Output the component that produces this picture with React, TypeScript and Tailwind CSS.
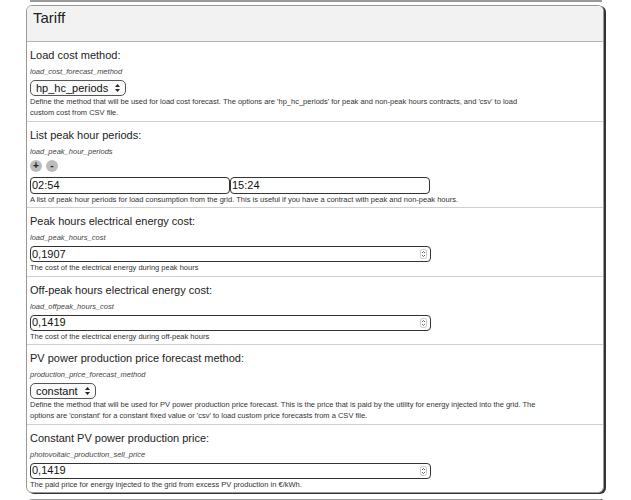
import React from 'react'

const font = { fontFamily: '"Liberation Sans", Arial, sans-serif' }

function Spinner() {
  return (
    <svg width="7" height="10" viewBox="0 0 7 10" className="shrink-0">
      <rect x="0.5" y="0.5" width="6" height="9" rx="2" fill="none" stroke="#bbb" strokeWidth="0.8" />
      <path d="M2 4 L3.5 2.5 L5 4" fill="none" stroke="#444" strokeWidth="0.8" />
      <path d="M2 6 L3.5 7.5 L5 6" fill="none" stroke="#444" strokeWidth="0.8" />
    </svg>
  )
}

function SelectArrows() {
  return (
    <svg width="7" height="10" viewBox="0 0 7 10" className="shrink-0">
      <path d="M1 4 L3.5 1 L6 4 Z" fill="#222" />
      <path d="M1 6 L3.5 9 L6 6 Z" fill="#222" />
    </svg>
  )
}

function Field({ label, name, children, desc, last }: { label: string; name: string; children: React.ReactNode; desc: React.ReactNode; last?: boolean }) {
  return (
    <div className={`px-[3px] pt-[7px] pb-[2.5px] ${last ? '' : 'border-b border-[#cfcfcf]'}`}>
      <div className="text-[11px] leading-[13px] text-[#222]">{label}</div>
      <div className="text-[7.5px] leading-[9px] italic text-[#444] mt-[5px]">{name}</div>
      <div className="mt-[4px]">{children}</div>
      <div className="text-[7.5px] leading-[11px] text-[#333]">{desc}</div>
    </div>
  )
}

function Select({ value, width }: { value: string; width: string }) {
  return (
    <div className={`${width} h-[16px] border border-[#555] rounded-[5px] bg-[#fafafa] flex items-center justify-between pl-[5px] pr-[4px]`}>
      <span className="text-[11px] leading-none text-[#111]">{value}</span>
      <SelectArrows />
    </div>
  )
}

function NumberInput({ value }: { value: string }) {
  return (
    <div className="w-[401px] h-[16px] border border-[#333] rounded-[4px] bg-white flex items-center justify-between pl-[1px] pr-[3px]">
      <span className="text-[11px] leading-none text-[#111]">{value}</span>
      <Spinner />
    </div>
  )
}

export default function App() {
  return (
    <div style={font} className="w-[631px] h-[500px] overflow-hidden bg-white relative">
      <div className="ml-[30px] w-[572px] h-[2px] bg-[#999]" />
      <div className="ml-[26px] mt-[3px] w-[578px] border border-[#999] rounded-[6px] shadow-[2px_1px_0_#333] bg-white overflow-hidden">
        <div className="h-[36px] bg-[#f2f2f2] border-b border-[#b5b5b5] px-[6px] pt-[3px]">
          <div className="text-[15px] leading-[18px] text-[#222]">Tariff</div>
        </div>

        <Field
          label="Load cost method:"
          name="load_cost_forecast_method"
          desc={
            <>
              Define the method that will be used for load cost forecast. The options are 'hp_hc_periods' for peak and non-peak hours contracts, and 'csv' to load
              <br />
              custom cost from CSV file.
            </>
          }
        >
          <Select value="hp_hc_periods" width="w-[96px]" />
        </Field>

        <Field
          label="List peak hour periods:"
          name="load_peak_hour_periods"
          desc="A list of peak hour periods for load consumption from the grid. This is useful if you have a contract with peak and non-peak hours."
        >
          <div className="flex gap-[4px]">
            <div className="w-[12px] h-[12px] rounded-full bg-[#bdbdbd] flex items-center justify-center text-[10px] leading-none font-bold text-[#222]">+</div>
            <div className="w-[12px] h-[12px] rounded-full bg-[#bdbdbd] flex items-center justify-center text-[10px] leading-none font-bold text-[#222]">-</div>
          </div>
          <div className="flex mt-[5px]">
            <div className="w-[200px] h-[17px] border border-[#333] rounded-[4px] flex items-center pl-[1px] text-[11px] text-[#111]">02:54</div>
            <div className="w-[200px] h-[17px] border border-[#333] rounded-[4px] flex items-center pl-[1px] text-[11px] text-[#111]">15:24</div>
          </div>
        </Field>

        <Field
          label="Peak hours electrical energy cost:"
          name="load_peak_hours_cost"
          desc="The cost of the electrical energy during peak hours"
        >
          <NumberInput value="0,1907" />
        </Field>

        <Field
          label="Off-peak hours electrical energy cost:"
          name="load_offpeak_hours_cost"
          desc="The cost of the electrical energy during off-peak hours"
        >
          <NumberInput value="0,1419" />
        </Field>

        <Field
          label="PV power production price forecast method:"
          name="production_price_forecast_method"
          desc={
            <>
              Define the method that will be used for PV power production price forecast. This is the price that is paid by the utility for energy injected into the grid. The
              <br />
              options are 'constant' for a constant fixed value or 'csv' to load custom price forecasts from a CSV file.
            </>
          }
        >
          <Select value="constant" width="w-[66px]" />
        </Field>

        <Field
          label="Constant PV power production price:"
          name="photovoltaic_production_sell_price"
          desc="The paid price for energy injected to the grid from excess PV production in €/kWh."
          last
        >
          <NumberInput value="0,1419" />
        </Field>
      </div>
      <div className="ml-[26px] mt-[6px] w-[578px] h-[20px] border border-[#999] rounded-t-[6px] shadow-[2px_0_0_#333]" />
    </div>
  )
}
